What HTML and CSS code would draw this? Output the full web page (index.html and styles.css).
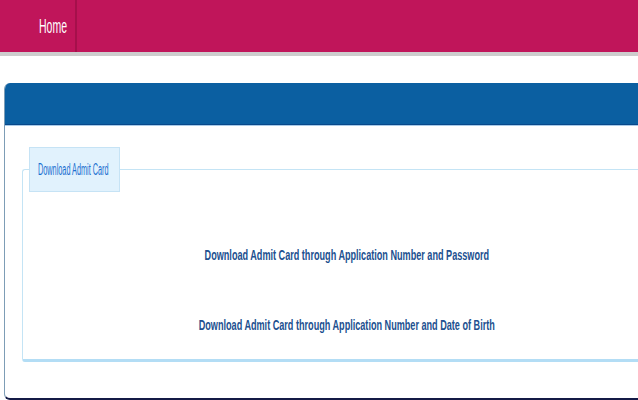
FILE: index.html
```html
<!DOCTYPE html>
<html lang="en">
<head>
<meta charset="utf-8">
<title>Download Admit Card</title>
<link rel="stylesheet" href="styles.css">
</head>
<body>
<header class="topbar">
  <nav class="nav">
    <a class="nav-item" href="#"><span class="nav-label">Home</span></a>
  </nav>
</header>
<main class="panel">
  <div class="panel-head"></div>
  <div class="panel-body">
    <fieldset class="box">
      <legend class="box-title"><span class="box-title-text">Download Admit Card</span></legend>
      <ul class="links">
        <li class="link-row"><a class="link" href="#">Download Admit Card through Application Number and Password</a></li>
        <li class="link-row"><a class="link" href="#">Download Admit Card through Application Number and Date of Birth</a></li>
      </ul>
    </fieldset>
  </div>
</main>
</body>
</html>
```
FILE: styles.css
```css
html {
  overflow: hidden;
}
body {
  margin: 0;
  background: #fff;
  font-family: "Liberation Sans", Arial, sans-serif;
}
.topbar {
  height: 52px;
  background: #c0155a;
  border-bottom: 4px solid #cdcdcd;
}
.nav {
  display: flex;
  height: 100%;
}
.nav-item {
  display: flex;
  align-items: center;
  width: 36px;
  height: 100%;
  padding-left: 39px;
  border-right: 2px solid #a5104b;
  color: #fff;
  text-decoration: none;
  font-size: 21px;
}
.nav-label {
  display: inline-block;
  white-space: nowrap;
  transform: scaleX(0.5);
  transform-origin: left center;
}
.panel {
  margin: 27px 0 0 4px;
  width: 700px;
  border-left: 1px solid #7d9db6;
  border-bottom: 2px solid #141a46;
  border-radius: 6px 0 0 6px;
  overflow: hidden;
}
.panel-head {
  height: 41px;
  background: #0b5fa1;
  border-bottom: 1px solid #08488a;
}
.panel-body {
  border-top: 1px solid #a9cbe8;
  padding: 21px 0 36px 17px;
}
.box {
  margin: 0;
  padding: 0;
  width: 647px;
  border: 1px solid #c4e4f5;
  border-right: none;
  border-bottom: 3px solid #b3ddf5;
  border-radius: 3px 0 0 3px;
}
.box-title {
  display: flex;
  align-items: center;
  box-sizing: border-box;
  width: 91px;
  height: 45px;
  margin-left: 6px;
  padding: 0 0 0 8px;
  border: 1px solid #c6e3f5;
  background: #e1f2fd;
}
.box-title-text {
  display: inline-block;
  white-space: nowrap;
  font-size: 16px;
  color: #1a6fd0;
  transform: scaleX(0.456);
  transform-origin: left center;
}
.links {
  list-style: none;
  margin: 0;
  padding: 53px 0 24px;
  text-align: center;
}
.link-row {
  line-height: 20px;
}
.link-row + .link-row {
  margin-top: 50px;
}
.link {
  display: inline-block;
  white-space: nowrap;
  font-size: 14px;
  font-weight: bold;
  color: #21508f;
  text-decoration: none;
  transform: scaleX(0.65);
}
```
